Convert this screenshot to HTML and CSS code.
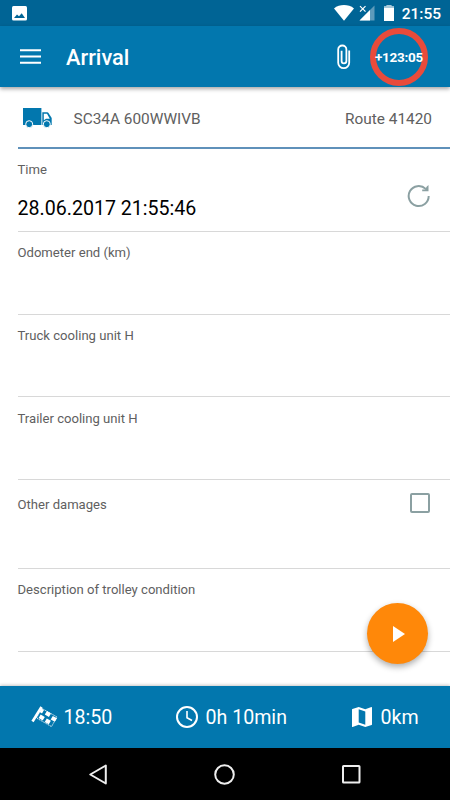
FILE: index.html
```html
<!DOCTYPE html>
<html lang="en">
<head>
<meta charset="utf-8">
<title>Arrival</title>
<link rel="stylesheet" href="styles.css">
</head>
<body>
<div class="screen">
  <div class="status">
    <svg class="status-photo" width="15" height="15" viewBox="0 0 15 15"><rect width="15" height="14.5" rx="1.5" fill="#fff"/><path d="M2 12 L5 8.5 L7 10.2 L9.7 7.2 L13 12Z" fill="#006495"/></svg>
    <div class="status-right">
      <svg class="wifi" width="20" height="16" viewBox="0 0 20 16"><path d="M0 3.4C5.8-1 14.2-1 20 3.4L10 15.7Z" fill="#fff"/></svg>
      <svg class="signal" width="16" height="16" viewBox="0 0 16 16"><path d="M15.5.5V15.5H.5Z" fill="#5e9bbb"/><path d="M11 5V15.5H.5Z" fill="#fff"/><path d="M0 0H8V6.5L6.5 8H0Z" fill="#006495"/><path d="M1 1.2L6.5 6.7M6.5 1.2L1 6.7" stroke="#fff" stroke-width="1.2"/></svg>
      <svg class="battery" width="10" height="16" viewBox="0 0 10 16"><path d="M0 1.6H2.7V0H7.3V1.6H10V16H0Z" fill="#fff"/><path d="M0 1.6H2.7V0H7.3V1.6H10V3H0Z" fill="#a9c9da"/></svg>
      <span class="clock">21:55</span>
    </div>
  </div>
  <header class="appbar">
    <svg class="menu" width="21" height="15" viewBox="0 0 21 15"><path d="M0 1.2H21M0 7.5H21M0 13.8H21" stroke="#fff" stroke-width="2"/></svg>
    <h1>Arrival</h1>
    <svg class="clip" width="14" height="26" viewBox="0 0 14 26"><path d="M12.2 6.5V18.7A5.5 5.5 0 0 1 1.2 18.7V5.6A4.1 4.1 0 0 1 9.4 5.6V17A2.4 2.4 0 0 1 4.6 17V6.8" fill="none" stroke="#fff" stroke-width="1.8"/></svg>
    <div class="ring"><span>+123:05</span></div>
  </header>
  <main>
    <div class="truck-row">
      <svg width="30" height="21" viewBox="0 0 30 21"><path d="M0 0H18.4V17H0Z" fill="#0277ae"/><path d="M19.3 4.3H24.2Q25 4.3 25.5 5L28.7 10V17H19.3Z" fill="#0277ae"/><path d="M20.8 5.7H24L26.8 10.7H23L20.8 12.3Z" fill="#fff"/><g fill="#0277ae" stroke="#fff" stroke-width="1"><circle cx="6.2" cy="16.2" r="3.5"/><circle cx="23.8" cy="16.2" r="3.5"/></g></svg>
      <span class="plate">SC34A 600WWIVB</span>
      <span class="route">Route 41420</span>
    </div>
    <div class="field">
      <div><label>Time</label><p class="value">28.06.2017 21:55:46</p></div>
      <svg class="refresh" width="24" height="24" viewBox="0 0 24 24"><path d="M21.7 12A10 10 0 1 1 18.7 4.9" fill="none" stroke="#8ba0a2" stroke-width="2"/><path d="M21.5 1V7.2H15.2V5.6L18 5.5L19.8 2.5Z" fill="#8ba0a2"/></svg>
    </div>
    <div class="field"><label>Odometer end (km)</label></div>
    <div class="field short"><label>Truck cooling unit H</label></div>
    <div class="field"><label>Trailer cooling unit H</label></div>
    <div class="field damages"><label>Other damages</label><i class="checkbox"></i></div>
    <div class="field last"><label>Description of trolley condition</label></div>
    <button class="fab" aria-label="Start"><svg width="12" height="16" viewBox="0 0 12 16"><path d="M0 0L12 8L0 16Z" fill="#fff"/></svg></button>
  </main>
  <footer class="summary">
    <div class="stat start">
      <svg width="27" height="22" viewBox="0 0 27 22"><path d="M1.5 15.5L10.5 1" stroke="#fff" stroke-width="2.6"/><path d="M10.5 2.2L26 11L20.5 20.6L5.5 12Z" fill="none" stroke="#fff" stroke-width=".8" stroke-dasharray="1.5 .6"/><path d="M15.9 5.1L20 7.5L17.9 11L13.8 8.6ZM21.8 10.1L26 12.2L23.8 15.8L19.7 13.4ZM9.7 8.6L13.8 11L11.7 14.5L7.6 12.1ZM15.8 12.4L19.9 14.8L17.8 18.3L13.7 15.9ZM10.5 2.4L13 4L11 7.5L8.5 6Z" fill="#fff"/></svg>
      <span>18:50</span>
    </div>
    <div class="stat duration">
      <svg width="22" height="22" viewBox="0 0 22 22"><circle cx="11" cy="11" r="10" fill="none" stroke="#fff" stroke-width="2"/><path d="M11 5V11.8L16 14.5" fill="none" stroke="#fff" stroke-width="1.6"/></svg>
      <span>0h 10min</span>
    </div>
    <div class="stat distance">
      <svg width="20" height="20" viewBox="0 0 20 20"><path fill="#fff" fill-rule="evenodd" d="M19.4 0L13.3 2.2L6.7 0L.4 2Q0 2.2 0 2.6V19.4Q0 20 .6 20L6.7 17.7L13.3 20L19.6 18Q20 17.8 20 17.4V.6Q20 0 19.4 0ZM13.3 17.8L6.7 15.4V2.2L13.3 4.5Z"/></svg>
      <span>0km</span>
    </div>
  </footer>
  <nav class="navbar">
    <svg width="18" height="21" viewBox="0 0 18 21"><path d="M16.8 1.5V19.5L1.3 10.5Z" fill="none" stroke="#eee" stroke-width="2" stroke-linejoin="round"/></svg>
    <svg width="21" height="21" viewBox="0 0 21 21"><circle cx="10.5" cy="10.5" r="9.3" fill="none" stroke="#eee" stroke-width="2"/></svg>
    <svg width="19" height="19" viewBox="0 0 19 19"><rect x="1" y="1" width="16.5" height="16.5" rx=".6" fill="none" stroke="#eee" stroke-width="2"/></svg>
  </nav>
</div>
</body>
</html>
```

FILE: styles.css
```css
* { box-sizing: border-box; }
body { margin: 0; font-family: Roboto, "Liberation Sans", sans-serif; }
svg { display: block; flex: none; }
.screen { width: 450px; height: 800px; display: flex; flex-direction: column; background: #fff; overflow: hidden; }

.status { height: 26px; flex: none; background: #006495; display: flex; align-items: flex-start; justify-content: space-between; padding: 5px 9px 0 12px; }
.status-photo { margin-top: 1px; }
.status-right { display: flex; align-items: flex-start; }
.signal { margin-left: 5px; }
.battery { margin-left: 9px; }
.clock { margin-left: 8px; color: #fff; font-size: 15.5px; font-weight: 500; line-height: 18px; }

.appbar { height: 61px; flex: none; background: #0277ae; color: #fff; display: flex; align-items: center; padding: 0 22px 0 20px; box-shadow: 0 2px 4px rgba(0, 0, 0, .35); z-index: 1; }
h1 { margin: 2px auto 0 25px; font-size: 21.8px; line-height: 26px; font-weight: 500; }
.clip { margin-right: 19px; }
.ring { width: 58px; height: 58px; border: 6px solid #e94b3b; border-radius: 50%; display: flex; align-items: center; justify-content: center; }
.ring span { font-size: 13.5px; font-weight: 700; letter-spacing: -.25px; white-space: nowrap; }

main { flex: 1; position: relative; padding-left: 17.5px; }
.truck-row { height: 62px; border-bottom: 2px solid #5f91ba; display: flex; align-items: center; padding: 3px 18px 0 5.5px; font-size: 15.4px; color: #606060; }
.plate { margin-left: 20.5px; }
.route { margin-left: auto; }
.field { height: 83px; border-bottom: 1px solid #d8d8d8; display: flex; justify-content: space-between; padding: 13px 19px 0 0; }
.field.short { height: 82px; }
.field.damages { height: 89px; padding: 17px 18px 0 0; }
.field.short + .field { padding-top: 14px; }
label { display: block; font-size: 13.1px; line-height: 16px; color: #606060; }
.value { margin: 19px 0 0; font-size: 19.6px; line-height: 24px; color: #000; }
.refresh { margin-top: 22px; }
.checkbox { width: 20px; height: 20px; margin: -4px 2px 0 0; border: 2px solid #8ba0a2; border-radius: 2px; }
.fab { position: absolute; left: 367px; top: 516px; width: 61px; height: 61px; border: 0; border-radius: 50%; background: #ff8809; display: flex; align-items: center; justify-content: center; padding: 0 0 0 3px; box-shadow: 0 3px 6px rgba(0, 0, 0, .32); }

.summary { height: 62px; flex: none; background: #0277ae; color: #fff; display: flex; align-items: center; padding-left: 30.5px; font-size: 19.6px; box-shadow: 0 -1px 3px rgba(0, 0, 0, .22); }
.stat { display: flex; align-items: center; white-space: nowrap; }
.start { width: 145.5px; gap: 6px; }
.duration { width: 176px; gap: 7.5px; }
.distance { gap: 8.5px; }

.navbar { height: 52px; flex: none; background: #000; display: flex; align-items: center; justify-content: space-between; padding: 0 89px 0 89px; }
```
